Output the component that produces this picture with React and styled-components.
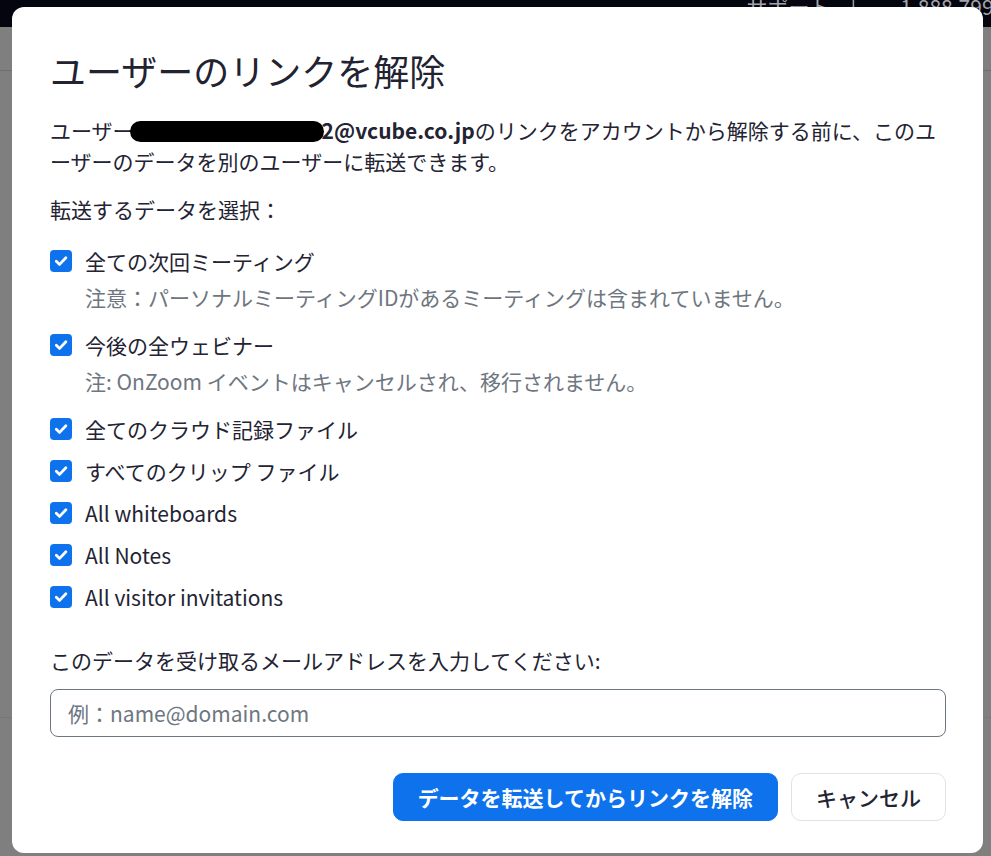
import React from 'react';
import styled, { createGlobalStyle } from 'styled-components';

const GlobalStyle = createGlobalStyle`
  html, body {
    margin: 0;
    padding: 0;
    height: 100%;
    overflow: hidden;
  }
  body {
    font-family: "Noto Sans CJK JP", "Noto Sans", sans-serif;
    color: #232333;
  }
`;

const items = [
  { label: '全ての次回ミーティング', note: '注意：パーソナルミーティングIDがあるミーティングは含まれていません。' },
  { label: '今後の全ウェビナー', note: '注: OnZoom イベントはキャンセルされ、移行されません。' },
  { label: '全てのクラウド記録ファイル' },
  { label: 'すべてのクリップ ファイル' },
  { label: 'All whiteboards' },
  { label: 'All Notes' },
  { label: 'All visitor invitations' },
];

const App = () => {
  return (
    <>
      <GlobalStyle />
      <Page>
        <TopBar>
          <TopLinks>
            <span>サポート</span>
            <Divider>|</Divider>
            <span>1.888.799.9666</span>
          </TopLinks>
        </TopBar>
        <Dim />
      </Page>
      <Overlay>
        <Modal>
          <Title>ユーザーのリンクを解除</Title>
          <Intro>
            ユーザー<Redacted />
            <b>2@vcube.co.jp</b>のリンクをアカウントから解除する前に、このユーザーのデータを別のユーザーに転送できます。
          </Intro>
          <SectionLabel>転送するデータを選択：</SectionLabel>
          <List>
            {items.map((it) => (
              <Item key={it.label}>
                <CheckRow>
                  <Check>
                    <svg width="16" height="16" viewBox="0 0 16 16">
                      <path d="M3.3 8.3 L6.6 11.4 L12.9 4.8" fill="none" stroke="#fff" strokeWidth="2.8" strokeLinecap="round" strokeLinejoin="round" />
                    </svg>
                  </Check>
                  <Label>{it.label}</Label>
                </CheckRow>
                {it.note && <Note>{it.note}</Note>}
              </Item>
            ))}
          </List>
          <InputLabel>このデータを受け取るメールアドレスを入力してください:</InputLabel>
          <EmailInput placeholder="例：name@domain.com" />
          <Actions>
            <Button primary>データを転送してからリンクを解除</Button>
            <Button>キャンセル</Button>
          </Actions>
        </Modal>
      </Overlay>
    </>
  );
};

const Page = styled.div`
  height: 856px;
  background: #7f7f7f;
  display: flex;
  flex-direction: column;
`;

const TopBar = styled.div`
  height: 27px;
  background: #05050f;
  display: flex;
  justify-content: flex-end;
  overflow: hidden;
`;

const TopLinks = styled.div`
  display: flex;
  gap: 14px;
  margin-top: -9px;
  margin-right: -55px;
  font-size: 21px;
  color: #a3a3aa;
`;

const Divider = styled.span`
  margin: 0 30px 0 6px;
`;

const Dim = styled.div`
  flex: 1;
  background:
    linear-gradient(#6e6e6e, #6e6e6e) 0 43px / 100% 1px no-repeat,
    linear-gradient(#777, #777) 0 690px / 100% 1px no-repeat,
    #7f7f7f;
`;

const Overlay = styled.div`
  position: fixed;
  inset: 0;
  padding: 7px 8px 3px 12px;
  box-sizing: border-box;
  display: flex;
`;

const Modal = styled.div`
  flex: 1;
  background: #fff;
  border-radius: 12px;
  padding: 42px 37px 32px 38px;
  box-sizing: border-box;
  display: flex;
  flex-direction: column;
`;

const Title = styled.h1`
  margin: 0;
  font-size: 36px;
  font-weight: 400;
  line-height: 43px;
  color: #222230;
`;

const Intro = styled.p`
  margin: 23px 0 0;
  font-size: 21px;
  line-height: 31px;
  b {
    font-weight: 700;
  }
`;

const Redacted = styled.span`
  display: inline-block;
  width: 194px;
  height: 21px;
  margin-left: -4px;
  margin-right: -2px;
  vertical-align: -3px;
  background: #000;
  border-radius: 11px;
`;

const SectionLabel = styled.div`
  margin-top: 17px;
  font-size: 21px;
  line-height: 30px;
`;

const List = styled.div`
  margin-top: 22px;
  display: flex;
  flex-direction: column;
  gap: 12px;
`;

const Item = styled.div`
  display: flex;
  flex-direction: column;
`;

const CheckRow = styled.label`
  display: flex;
  align-items: center;
  gap: 13px;
`;

const Check = styled.span`
  width: 22px;
  height: 22px;
  border-radius: 4px;
  background: #0e72ed;
  display: flex;
  align-items: center;
  justify-content: center;
  flex-shrink: 0;
`;

const Label = styled.span`
  font-size: 21px;
  line-height: 30px;
`;

const Note = styled.div`
  margin: 6px 0 6px 35px;
  font-size: 21px;
  line-height: 30px;
  color: #6e7680;
`;

const InputLabel = styled.div`
  margin-top: 33px;
  font-size: 21px;
  line-height: 30px;
`;

const EmailInput = styled.input`
  margin-top: 14px;
  height: 48px;
  box-sizing: border-box;
  border: 1px solid #6e7680;
  border-radius: 8px;
  padding: 0 17px;
  font-family: inherit;
  font-size: 21px;
  color: #232333;
  outline: none;
  &::placeholder {
    color: #6e7680;
  }
`;

const Actions = styled.div`
  margin-top: 36px;
  display: flex;
  justify-content: flex-end;
  gap: 13px;
`;

const Button = styled.button`
  height: 48px;
  padding: 0 24px;
  border-radius: 10px;
  font-family: inherit;
  font-size: 21px;
  font-weight: ${(p) => (p.primary ? 600 : 500)};
  cursor: pointer;
  border: 1px solid ${(p) => (p.primary ? '#0e72ed' : '#dfe3e8')};
  background: ${(p) => (p.primary ? '#0e72ed' : '#fff')};
  color: ${(p) => (p.primary ? '#fff' : '#232333')};
`;

export default App;
